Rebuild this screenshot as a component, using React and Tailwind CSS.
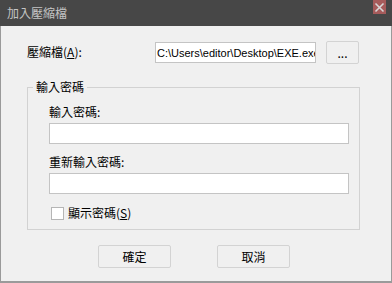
import React from 'react';

const cjk = { fontFamily: '"Noto Sans CJK TC", "Noto Sans", sans-serif' };

const Mnemonic = ({ children }) => (
  <span>
    (<u className="underline-offset-[1px]">{children}</u>)
  </span>
);

const WinButton = ({ children, className = '' }) => (
  <button
    className={`h-[23px] border border-[#d3d3d3] rounded-[2px] bg-[#f0f0f0] text-[12px] leading-[21px] text-black ${className}`}
    style={cjk}
  >
    {children}
  </button>
);

export default function App() {
  return (
    <div className="w-[392px] h-[283px] flex flex-col bg-[#f0f0f0] text-[12px] text-black" style={cjk}>
      {/* title bar */}
      <div className="h-[26px] shrink-0 bg-[#474747] flex items-start justify-between">
        <span className="pl-[7px] pt-[5px] text-[12px] leading-[16px] text-[#c4c4c4]">加入壓縮檔</span>
        <div className="mr-[6px] w-[13px] h-[14px] bg-[#a65b5b] flex items-center justify-center">
          <svg width="11" height="11" viewBox="0 0 11 11">
            <path d="M1.5 1.5 L9.5 9.5 M9.5 1.5 L1.5 9.5" stroke="#d8d8d8" strokeWidth="1.6" />
          </svg>
        </div>
      </div>

      {/* dialog body */}
      <div className="flex-1 flex flex-col border-l border-r border-b-2 border-[#9a9a9a] bg-[#f0f0f0]">
        <div className="flex items-start pt-[15px] pl-[26px]">
          <span className="w-[128px] pt-[3px] leading-[16px]">
            壓縮檔<Mnemonic>A</Mnemonic>:
          </span>
          <div className="mt-[1px] w-[161px] h-[21px] border border-[#c4c4c4] bg-white overflow-hidden whitespace-nowrap pl-[1px]">
            <span className="text-[11px] leading-[19px]" style={{ fontFamily: '"Liberation Sans", Arial, sans-serif' }}>
              C:\Users\editor\Desktop\EXE.exe
            </span>
          </div>
          <WinButton className="ml-[10px] w-[33px] leading-[19px]">...</WinButton>
        </div>

        <fieldset className="ml-[26px] mt-[15px] w-[333px] h-[151px] border border-[#d2d2d2] pl-[21px] pr-[10px]">
          <legend className="ml-[-16px] px-[3px] leading-[16px]">輸入密碼</legend>
          <div className="pt-[9px] leading-[16px]">輸入密碼:</div>
          <div className="mt-[3px] w-[300px] h-[21px] border border-[#c4c4c4] bg-white" />
          <div className="mt-[10px] leading-[16px]">重新輸入密碼:</div>
          <div className="mt-[3px] w-[300px] h-[21px] border border-[#c4c4c4] bg-white" />
          <div className="mt-[11px] flex items-center">
            <div className="ml-[2px] w-[13px] h-[13px] border border-[#b5b5b5] bg-white" />
            <span className="ml-[4px] leading-[16px]">
              顯示密碼<Mnemonic>S</Mnemonic>
            </span>
          </div>
        </fieldset>

        <div className="flex pl-[97px] mt-[15px] gap-[46px]">
          <WinButton className="w-[73px]">確定</WinButton>
          <WinButton className="w-[73px]">取消</WinButton>
        </div>
      </div>
    </div>
  );
}
